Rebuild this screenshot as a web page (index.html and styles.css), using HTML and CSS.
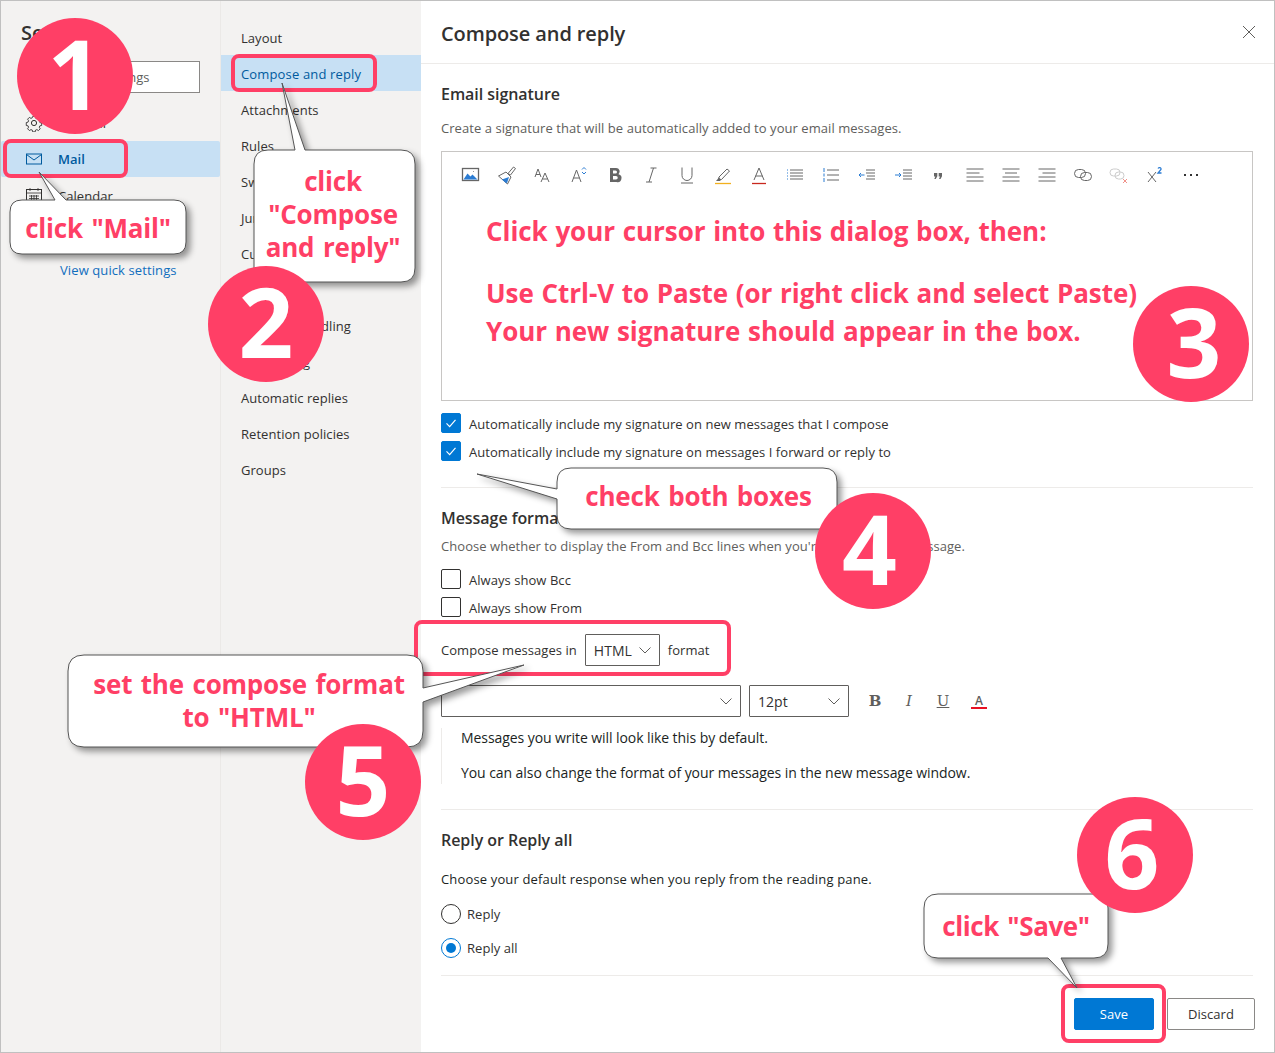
FILE: index.html
```html
<!DOCTYPE html>
<html lang="en">
<head>
  <meta charset="UTF-8" />
  <title>Compose and reply</title>
  <link rel="stylesheet" href="styles.css">
</head>
<body>
  <div class="frame">

    <nav class="nav">
      <div class="nav-title">Settings</div>
      <div class="search">Search settings</div>
      <div class="nav-item">
        <svg class="nav-icon" viewBox="0 0 18 18" width="18" height="18"><circle cx="9" cy="9" r="2.6"/><path d="M7.6 1.5h2.8l.4 2.1 1.5.7 1.8-1.1 2 2-1.1 1.8.6 1.5 2 .5v2.8l-2 .4-.7 1.5 1.1 1.8-2 2-1.8-1.1-1.5.6-.4 2H7.6l-.5-2-1.5-.6-1.8 1.1-2-2 1.1-1.8-.6-1.5-2-.4V8.5l2-.5.6-1.5-1.1-1.8 2-2 1.8 1.1 1.5-.7z" transform="translate(1 1) scale(.89)"/></svg>
        <span>General</span>
      </div>
      <div class="nav-item nav-item-on">
        <svg class="nav-icon" viewBox="0 0 18 18" width="18" height="18"><rect x="1.500" y="4" width="15" height="10"/><path d="M1.500 4.500l7.500 5.500 7.500-5.500"/></svg>
        <span>Mail</span>
      </div>
      <div class="nav-item">
        <svg class="nav-icon" viewBox="0 0 18 18" width="18" height="18"><rect x="1.500" y="2.500" width="15" height="14"/><path d="M1.500 6h15M5 1v3M13 1v3M4 9h10M4 11.500h10M4 14h10M6.500 8v7M9 8v7M11.500 8v7" stroke-width=".8"/></svg>
        <span>Calendar</span>
      </div>
      <div class="nav-item">
        <span class="nav-icon"></span>
        <span>People</span>
      </div>
      <div class="nav-link">View quick settings</div>
    </nav>

    <div class="sub">
      <div class="sub-item">Layout</div>
      <div class="sub-item sub-item-on">Compose and reply</div>
      <div class="sub-item">Attachments</div>
      <div class="sub-item">Rules</div>
      <div class="sub-item">Sweep</div>
      <div class="sub-item">Junk email</div>
      <div class="sub-item">Customize actions</div>
      <div class="sub-item">Sync email</div>
      <div class="sub-item">Message handling</div>
      <div class="sub-item">Forwarding</div>
      <div class="sub-item">Automatic replies</div>
      <div class="sub-item">Retention policies</div>
      <div class="sub-item">Groups</div>
    </div>

    <main class="main">
      <header class="main-head">
        <h1>Compose and reply</h1>
        <svg class="close" viewBox="0 0 14 14" width="14" height="14"><path d="M1 1l12 12M13 1L1 13"/></svg>
      </header>

      <div class="main-body">
        <h2 class="h-sig">Email signature</h2>
        <p class="hint">Create a signature that will be automatically added to your email messages.</p>

        <div class="editor">
          <div class="toolbar">
            <span class="tool"><svg viewBox="0 0 20 20"><rect x="1.500" y="3.500" width="16" height="12" stroke="#666" stroke-width="1.300" fill="#fff"/><path d="M2.500 14.500l4-6 3 3 2-2 5 5z" fill="#2b7cd3" stroke="none"/><path d="M12 6.500h1" stroke="#999"/></svg></span>
            <span class="tool"><svg viewBox="0 0 20 20"><path d="M11 8.500l5.500-6.500 2 1.500-5 6.500z"/><path d="M1.500 11l7.500-4 5 5-3.500 7z" fill="#fff"/><path d="M5 14.500l7-2.500-1.800 5.500-1 .8z" fill="#2b7cd3" stroke="none"/></svg></span>
            <span class="tool"><svg viewBox="0 0 20 20"><path d="M2 12l3-8 3 8M3 9.500h4M8 17l4-9 4 9M9.500 14h5"/></svg></span>
            <span class="tool"><svg viewBox="0 0 20 20"><path d="M3 17l4.500-12L12 17M4.500 13h6"/><path d="M13 4.500l2-2 2 2M13 7l2 2 2-2" stroke="#2b7cd3"/></svg></span>
            <span class="tool"><svg viewBox="0 0 20 20"><path class="solid" d="M5 3h6a3.600 3.600 0 0 1 2.500 6.300A3.800 3.800 0 0 1 11.500 17H5zm3 2.500v3h2.500a1.500 1.500 0 0 0 0-3zm0 5.500v3.500h3a1.750 1.750 0 0 0 0-3.500z"/></svg></span>
            <span class="tool"><svg viewBox="0 0 20 20"><path d="M12.500 3L8 17M9.500 3h6M5 17h6"/></svg></span>
            <span class="tool"><svg viewBox="0 0 20 20"><path d="M5 2.500v8a5 5 0 0 0 10 0v-8M4 18h12"/></svg></span>
            <span class="tool"><svg viewBox="0 0 20 20"><path d="M6 12L14 4l2.500 2-8 8.500-3 .5z"/><path class="solid" d="M3 16l3-3.500 2 2-1 1.500z"/><path d="M2 18.500h16" stroke="#f2b01e" stroke-width="1.300"/></svg></span>
            <span class="tool"><svg viewBox="0 0 20 20"><path d="M5 15l5-12 5 12M6.500 11h7"/><path d="M3 18.500h14" stroke="#c8281e" stroke-width="1.300"/></svg></span>
            <span class="tool"><svg viewBox="0 0 20 20"><path d="M5 5h13M5 8h13M5 11h13M5 14h13"/><path d="M2 5h1M2 8h1M2 11h1M2 14h1" stroke="#2b7cd3"/></svg></span>
            <span class="tool"><svg viewBox="0 0 20 20"><path d="M6 5h12M6 10h12M6 15h12"/><path d="M3 3v4M3 8.500v3M3 13v4" stroke="#2b7cd3"/></svg></span>
            <span class="tool"><svg viewBox="0 0 20 20"><path d="M9 5h9M9 8h9M10 11h8M9 14h9"/><path d="M7.500 10H2M4 8l-2 2 2 2" stroke="#2b7cd3"/></svg></span>
            <span class="tool"><svg viewBox="0 0 20 20"><path d="M10 5h9M10 8h9M10 11h9M10 14h9"/><path d="M2 10h6M6 8l2 2-2 2" stroke="#2b7cd3"/></svg></span>
            <span class="tool"><svg viewBox="0 0 20 20"><path class="solid" d="M5 8h3.300v3.200L6.800 14H5.300l1-2.600H5zM9.700 8H13v3.200L11.500 14H10l1-2.600H9.700z"/></svg></span>
            <span class="tool"><svg viewBox="0 0 20 20"><path d="M1.500 4h17M1.500 8h13M1.500 12h17M1.500 16h17"/></svg></span>
            <span class="tool"><svg viewBox="0 0 20 20"><path d="M1.500 4h17M4 8h12M1.500 12h17M1.500 16h17"/></svg></span>
            <span class="tool"><svg viewBox="0 0 20 20"><path d="M1.500 4h17M5.500 8h13M1.500 12h17M1.500 16h17"/></svg></span>
            <span class="tool"><svg viewBox="0 0 20 20"><rect x="1.500" y="4.500" width="11" height="8" rx="4"/><rect x="7.500" y="7.500" width="11" height="8" rx="4"/></svg></span>
            <span class="tool"><svg viewBox="0 0 20 20"><g stroke="#ccc"><rect x="1" y="4" width="10" height="7" rx="3.500"/><rect x="6" y="7" width="9" height="7" rx="3.500"/></g><path d="M14 14l4 4M18 14l-4 4" stroke="#f0928a"/></svg></span>
            <span class="tool"><svg viewBox="0 0 20 20"><path d="M3 7l8 10M11 7L3 17"/><path d="M13 3.500c1-1.500 3.500-1 3 1L13 8h3.500" stroke="#2b7cd3" stroke-width="1.300"/></svg></span>
            <span class="tool"><svg viewBox="0 0 20 20"><path class="dots" d="M3 9h2v2H3zM9 9h2v2H9zM15 9h2v2h-2z"/></svg></span>
          </div>
          <div class="editor-text">
            <p>Click your cursor into this dialog box, then:</p>
            <p class="editor-gap">Use Ctrl-V to Paste (or right click and select Paste)</p>
            <p>Your new signature should appear in the box.</p>
          </div>
        </div>

        <label class="check check-first"><span class="box box-on"><svg viewBox="0 0 20 20"><path d="M5 10.500l3.500 3.500L15 6.500"/></svg></span>Automatically include my signature on new messages that I compose</label>
        <label class="check"><span class="box box-on"><svg viewBox="0 0 20 20"><path d="M5 10.500l3.500 3.500L15 6.500"/></svg></span>Automatically include my signature on messages I forward or reply to</label>

        <hr class="rule rule-format">

        <h2 class="h-format">Message format</h2>
        <p class="hint hint-format">Choose whether to display the From and Bcc lines when you're composing a message.</p>

        <label class="check check-bcc"><span class="box"></span>Always show Bcc</label>
        <label class="check"><span class="box"></span>Always show From</label>

        <div class="compose-row">
          <span>Compose messages in</span>
          <span class="select select-html">HTML<svg class="chev" viewBox="0 0 12 7"><path d="M.5.500L6 6l5.500-5.500"/></svg></span>
          <span>format</span>
        </div>

        <div class="font-row">
          <span class="select select-font"><svg class="chev" viewBox="0 0 12 7"><path d="M.5.500L6 6l5.500-5.500"/></svg></span>
          <span class="select select-size">12pt<svg class="chev" viewBox="0 0 12 7"><path d="M.5.500L6 6l5.500-5.500"/></svg></span>
          <span class="fmt fmt-b">B</span>
          <span class="fmt fmt-i">I</span>
          <span class="fmt fmt-u">U</span>
          <span class="fmt fmt-a">A</span>
        </div>

        <div class="preview">
          <p>Messages you write will look like this by default.</p>
          <p>You can also change the format of your messages in the new message window.</p>
        </div>

        <hr class="rule rule-reply">

        <h2 class="h-reply">Reply or Reply all</h2>
        <p class="hint hint-reply">Choose your default response when you reply from the reading pane.</p>

        <label class="radio radio-first"><span class="dot"></span>Reply</label>
        <label class="radio"><span class="dot dot-on"></span>Reply all</label>

        <hr class="rule rule-foot">

        <div class="foot">
          <button class="btn btn-save">Save</button>
          <button class="btn">Discard</button>
        </div>
      </div>
    </main>
  </div>

  <!-- annotations drawn over the screenshot -->
  <div class="mark mark-mail"></div>
  <div class="mark mark-compose"></div>
  <div class="mark mark-html"></div>
  <div class="mark mark-save"></div>

  <svg class="bubbles" viewBox="0 0 1275 1053" width="1275" height="1053">
    <path d="M22 200H55L39 172L66 200H174Q186 200 186 212V242Q186 254 174 254H22Q10 254 10 242V212Q10 200 22 200Z"/>
    <path d="M268 150H295L282 83L305 150H401Q415 150 415 164V268Q415 282 401 282H268Q254 282 254 268V164Q254 150 268 150Z"/>
    <path d="M571 468H823Q837 468 837 482V515Q837 529 823 529H571Q557 529 557 515V499L477 474L557 489V482Q557 468 571 468Z"/>
    <path d="M84 655H407Q423 655 423 671V688L524 665L423 702V731Q423 747 407 747H84Q68 747 68 731V671Q68 655 84 655Z"/>
    <path d="M938 894H1094Q1108 894 1108 908V944Q1108 958 1094 958H1061L1077 988L1048 958H938Q924 958 924 944V908Q924 894 938 894Z"/>
  </svg>

  <div class="note note-mail">click "Mail"</div>
  <div class="note note-compose">click<br>"Compose<br>and reply"</div>
  <div class="note note-check">check both boxes</div>
  <div class="note note-html">set the compose format<br>to "HTML"</div>
  <div class="note note-save">click "Save"</div>

  <div class="step step-1">1</div>
  <div class="step step-2">2</div>
  <div class="step step-3">3</div>
  <div class="step step-4">4</div>
  <div class="step step-5">5</div>
  <div class="step step-6">6</div>
</body>
</html>
```

FILE: styles.css
```css
* {
  box-sizing: border-box;
}

html, body {
  margin: 0;
  padding: 0;
}

body {
  width: 1275px;
  height: 1053px;
  overflow: hidden;
  position: relative;
  font-family: "Open Sans", "Noto Sans", sans-serif;
  font-size: 13px;
  letter-spacing: 0.05px;
  color: #323130;
  background: #fff;
}

.frame {
  display: flex;
  width: 1275px;
  height: 1053px;
  border: 1px solid #c0c0c0;
}

p, h1, h2 {
  margin: 0;
}

/* left nav */
.nav {
  width: 220px;
  background: #f3f2f1;
  border-right: 1px solid #ebe9e7;
  flex-shrink: 0;
}

.nav-title {
  font-size: 20px;
  font-weight: 600;
  line-height: 28px;
  margin: 18px 0 0 20px;
}

.search {
  width: 179px;
  height: 32px;
  margin: 14px 0 12px 20px;
  padding-left: 35px;
  line-height: 30px;
  background: #fff;
  border: 1px solid #8a8886;
  color: #605e5c;
}

.nav-item {
  display: flex;
  align-items: center;
  height: 36px;
  padding-left: 24px;
  gap: 15px;
}

.nav-icon {
  width: 18px;
  height: 18px;
  fill: none;
  stroke: #323130;
  stroke-width: 1;
  flex-shrink: 0;
}

.nav-item-on {
  margin-bottom: 1px;
  background: #c7e0f4;
  color: #005a9e;
  font-weight: 600;
  border-radius: 2px;
}

.nav-item-on .nav-icon {
  stroke: #005a9e;
}

.nav-link {
  margin: 10px 0 0 59px;
  line-height: 20px;
  color: #106ebe;
  letter-spacing: 0.1px;
}

/* middle column */
.sub {
  width: 200px;
  padding-top: 19px;
  background: #f3f2f1;
  flex-shrink: 0;
}

.sub-item {
  height: 36px;
  line-height: 36px;
  padding-left: 20px;
}

.sub-item-on {
  margin: -1px 0 1px;
  padding-top: 1px;
  background: #c7e0f4;
  color: #005a9e;
  letter-spacing: 0.15px;
}

/* main panel */
.main {
  flex: 1;
  min-width: 0;
}

.main-head {
  display: flex;
  align-items: center;
  justify-content: space-between;
  height: 63px;
  padding: 0 18px 0 20px;
  border-bottom: 1px solid #edebe9;
}

h1 {
  font-size: 20px;
  font-weight: 600;
  letter-spacing: -0.1px;
  padding-top: 2px;
}

.close {
  fill: none;
  stroke: #605e5c;
  stroke-width: 1;
}

.main-body {
  padding: 0 21px 0 20px;
}

h2 {
  font-size: 16px;
  font-weight: 600;
  line-height: 22px;
  letter-spacing: -0.05px;
}

.h-sig {
  margin-top: 19px;
}

.hint {
  color: #605e5c;
  line-height: 18px;
  margin-top: 14px;
}

.editor {
  width: 812px;
  height: 250px;
  margin-top: 14px;
  border: 1px solid #c8c6c4;
}

.toolbar {
  display: flex;
  padding: 13px 0 0 11px;
}

.tool {
  width: 36px;
  height: 20px;
  display: flex;
  justify-content: center;
}

.tool svg {
  width: 20px;
  height: 20px;
  fill: none;
  stroke: #666;
  stroke-width: 1;
}

.tool .solid {
  fill: #666;
  stroke: none;
}

.tool .dots {
  fill: #333;
  stroke: none;
}

.editor-text {
  padding: 27px 0 0 44px;
  color: #ff3f66;
  font-size: 26px;
  font-weight: 700;
  line-height: 38px;
  letter-spacing: -0.05px;
  word-spacing: 1px;
}

.editor-gap {
  margin-top: 24px;
}

.check {
  display: flex;
  align-items: center;
  gap: 8px;
  height: 20px;
  margin-top: 8px;
}

.check-first {
  margin-top: 13px;
}

.check-bcc {
  margin-top: 15px;
}

.box {
  width: 20px;
  height: 20px;
  margin-top: -2px;
  border: 1px solid #323130;
  border-radius: 2px;
  flex-shrink: 0;
}

.box-on {
  background: #0078d4;
  border-color: #0078d4;
}

.box svg {
  display: block;
  width: 18px;
  height: 18px;
  fill: none;
  stroke: #fff;
  stroke-width: 1.3;
}

.rule {
  border: 0;
  border-top: 1px solid #edebe9;
  margin: 0;
}

.rule-format {
  margin-top: 25px;
}

.h-format {
  margin-top: 19px;
}

.hint-format {
  margin-top: 8px;
}

.compose-row {
  display: flex;
  align-items: center;
  gap: 8px;
  height: 32px;
  margin-top: 16px;
}

.select {
  display: flex;
  align-items: center;
  justify-content: space-between;
  border: 1px solid #605e5c;
  border-radius: 1px;
  padding: 0 8px;
  background: #fff;
  font-size: 14px;
}

.select-html {
  width: 75px;
  height: 32px;
}

.chev {
  width: 12px;
  height: 7px;
  fill: none;
  stroke: #605e5c;
  stroke-width: 1;
}

.select-font {
  width: 300px;
  height: 32px;
  justify-content: flex-end;
}

.select-size {
  width: 100px;
  height: 32px;
}

.font-row {
  display: flex;
  align-items: center;
  margin-top: 19px;
  gap: 8px;
}

.fmt {
  width: 26px;
  text-align: center;
  font-size: 15px;
  color: #605e5c;
  font-family: "DejaVu Serif", serif;
}

.fmt-b {
  font-weight: 700;
  margin-left: 5px;
}

.fmt-i {
  font-style: italic;
}

.fmt-u {
  text-decoration: underline;
}

.fmt-a {
  font-family: "Open Sans", sans-serif;
  font-size: 12px;
  font-weight: 600;
  color: #605e5c;
  border-bottom: 2px solid #e81123;
  width: 16px;
  margin-left: 7px;
  line-height: 13px;
}

.preview {
  margin-top: 11px;
  height: 56px;
  padding-left: 19px;
  border-left: 1px solid #edebe9;
  color: #201f1e;
  font-size: 14px;
  letter-spacing: -0.07px;
  line-height: 20px;
}

.preview p + p {
  margin-top: 15px;
}

.rule-reply {
  margin-top: 25px;
}

.h-reply {
  margin-top: 19px;
}

.hint-reply {
  margin-top: 19px;
  color: #201f1e;
  letter-spacing: 0.15px;
}

.radio {
  display: flex;
  align-items: center;
  gap: 6px;
  height: 20px;
  margin-top: 14px;
}

.radio-first {
  margin-top: 16px;
}

.dot {
  width: 20px;
  height: 20px;
  border: 1px solid #323130;
  border-radius: 50%;
  flex-shrink: 0;
  display: flex;
  align-items: center;
  justify-content: center;
}

.dot-on {
  border-color: #0078d4;
}

.dot-on::after {
  content: "";
  width: 10px;
  height: 10px;
  border-radius: 50%;
  background: #0078d4;
}

.rule-foot {
  margin-top: 17px;
}

.foot {
  display: flex;
  justify-content: flex-end;
  gap: 13px;
  margin: 22px -2px 0 0;
}

.btn {
  width: 88px;
  height: 32px;
  border: 1px solid #8a8886;
  border-radius: 2px;
  background: #fff;
  color: #323130;
  font: inherit;
  letter-spacing: inherit;
}

.btn-save {
  width: 80px;
  background: #0078d4;
  border-color: #0078d4;
  color: #fff;
}

/* annotations */
.mark {
  position: absolute;
  border: 4px solid #ff3f66;
  border-radius: 8px;
}

.mark-mail {
  left: 3px;
  top: 139px;
  width: 125px;
  height: 39px;
}

.mark-compose {
  left: 231px;
  top: 54px;
  width: 146px;
  height: 38px;
}

.mark-html {
  left: 414px;
  top: 620px;
  width: 317px;
  height: 56px;
}

.mark-save {
  left: 1061px;
  top: 984px;
  width: 105px;
  height: 59px;
}

.bubbles {
  position: absolute;
  left: 0;
  top: 0;
  overflow: visible;
}

.bubbles path {
  fill: #fff;
  stroke: #555;
  stroke-width: 1;
  filter: drop-shadow(4px 4px 3px rgba(0, 0, 0, 0.4));
}

.note {
  position: absolute;
  color: #ff3f66;
  font-size: 26px;
  font-weight: 700;
  line-height: 33px;
  letter-spacing: -0.2px;
  word-spacing: 2px;
  text-align: center;
}

.note-mail {
  left: 10px;
  top: 212px;
  width: 176px;
}

.note-compose {
  left: 254px;
  top: 165px;
  width: 158px;
}

.note-check {
  left: 557px;
  top: 480px;
  width: 283px;
}

.note-html {
  left: 68px;
  top: 668px;
  width: 362px;
}

.note-save {
  left: 926px;
  top: 910px;
  width: 180px;
  letter-spacing: -0.4px;
}

.step {
  position: absolute;
  width: 116px;
  height: 116px;
  border-radius: 50%;
  background: #ff3f66;
  color: #fff;
  font-size: 96px;
  font-weight: 700;
  line-height: 110px;
  letter-spacing: 0;
  text-align: center;
}

.step-1 { left: 17px; top: 18px; }
.step-2 { left: 208px; top: 266px; }
.step-3 { left: 1133px; top: 286px; text-indent: 6px; }
.step-4 { left: 815px; top: 493px; text-indent: -7px; }
.step-5 { left: 305px; top: 724px; }
.step-6 { left: 1077px; top: 797px; text-indent: -6px; }
```
